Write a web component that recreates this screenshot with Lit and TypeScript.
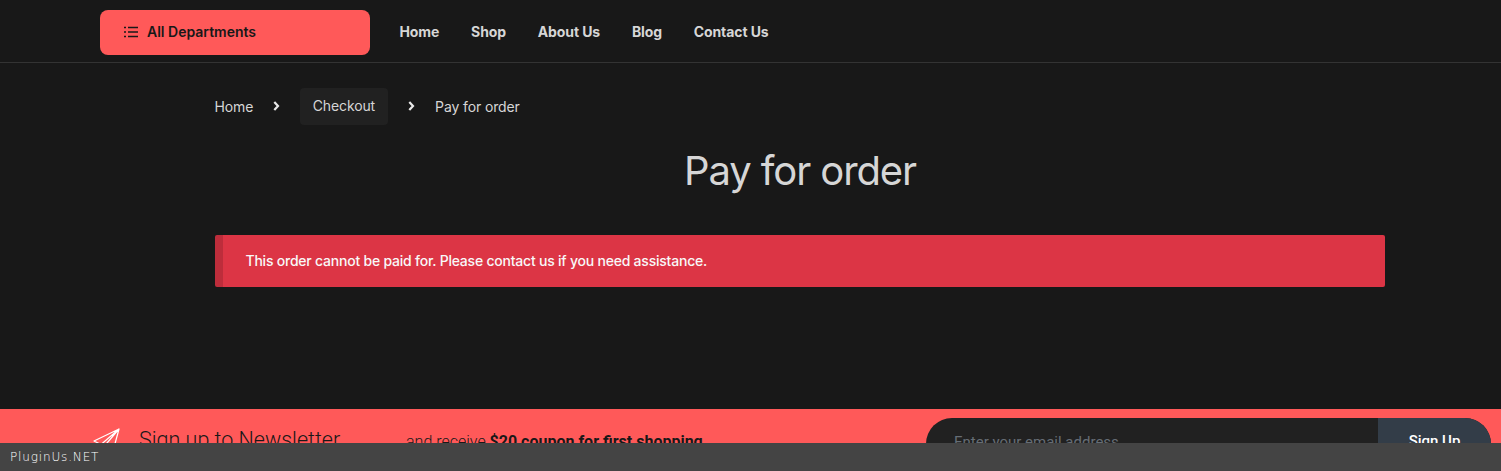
import { LitElement, html, css } from "lit";
import { customElement } from "lit/decorators.js";

@customElement("app-root")
export class AppRoot extends LitElement {
  static styles = css`
    :host {
      display: block;
      height: 471px;
      overflow: hidden;
      background: #181818;
      font-family: Inter, "Liberation Sans", sans-serif;
      color: #d6d6d6;
      position: relative;
    }
    .header {
      height: 63px;
      box-sizing: border-box;
      border-bottom: 1px solid #333333;
      display: flex;
      align-items: flex-start;
      padding: 10px 0 0 100px;
    }
    .dept {
      width: 270px;
      height: 45px;
      box-sizing: border-box;
      background: #ff5959;
      border-radius: 8px;
      display: flex;
      align-items: center;
      gap: 9px;
      padding: 0 0 2px 24px;
      font-size: 14px;
      font-weight: 600;
      color: #181818;
    }
    .nav {
      display: flex;
      gap: 31.8px;
      margin-left: 29.5px;
      height: 43px;
      align-items: center;
      font-size: 14px;
      font-weight: 700;
      letter-spacing: -0.1px;
      color: #d6d6d6;
    }
    .main {
      height: 346px;
      box-sizing: border-box;
      padding: 25px 116px 0 215px;
    }
    .crumbs {
      display: flex;
      align-items: center;
      height: 37px;
      margin-left: -0.5px;
      font-size: 14px;
      letter-spacing: -0.12px;
      color: #d6d6d6;
    }
    .crumbs svg { display: block; margin-top: -2px; }
    .sep1 { margin: 0 19.5px 0 20px; }
    .sep2 { margin: 0 20px 0 20px; }
    .chip {
      background: #212121;
      border-radius: 4px;
      height: 37px;
      padding: 0 13px 2px 13px;
      display: flex;
      align-items: center;
      box-sizing: border-box;
    }
    h1 {
      margin: 22px 0 0;
      font-size: 40px;
      line-height: 48px;
      font-weight: 400;
      letter-spacing: -1.1px;
      text-align: center;
      color: #d6d6d6;
    }
    .alert {
      margin-top: 40px;
      height: 52px;
      box-sizing: border-box;
      background: #dc3545;
      border-left: 8px solid #bd2d3b;
      border-radius: 2px;
      padding: 0 0 1px 22.5px;
      display: flex;
      align-items: center;
      font-size: 14px;
      font-weight: 500;
      letter-spacing: -0.22px;
      color: #f8f8f8;
    }
    .news {
      height: 80px;
      background: #ff5959;
      display: flex;
      align-items: flex-start;
      padding: 9px 10px 0 93px;
      color: #181818;
    }
    .news svg { margin-top: 10px; flex: none; }
    .news-title {
      font-family: Roboto, sans-serif;
      font-size: 21.5px;
      font-weight: 300;
      line-height: 28px;
      margin: 8px 0 0 19px;
      width: 267px;
      flex: none;
      white-space: nowrap;
    }
    .news-text {
      font-family: Roboto, sans-serif;
      font-size: 16px;
      font-weight: 300;
      line-height: 28px;
      margin-top: 10px;
      flex: 1;
      white-space: nowrap;
    }
    .news-text b { font-weight: 700; }
    .form {
      width: 565px;
      height: 60px;
      flex: none;
      display: flex;
      background: #212121;
      border-radius: 26px;
      overflow: hidden;
      font-family: Roboto, sans-serif;
      font-size: 15px;
    }
    .ph {
      flex: 1;
      padding: 14px 0 0 28px;
      line-height: 20px;
      color: #666d75;
    }
    .btn {
      width: 113px;
      background: #333d48;
      color: #fff;
      text-align: center;
      padding-top: 13px;
      line-height: 20px;
      font-weight: 500;
    }
    .bar {
      position: absolute;
      left: 0;
      right: 0;
      bottom: 0;
      height: 28px;
      background: #444444;
      color: #ffffff;
      font-family: "DejaVu Sans", sans-serif;
      font-size: 12px;
      font-weight: 200;
      line-height: 29px;
      letter-spacing: 0.85px;
      padding-left: 10px;
    }
  `;

  private chevron(cls: string) {
    return html`<svg class=${cls} width="7" height="10" viewBox="0 0 7 10" fill="none" stroke="#e8e8e8" stroke-width="2.2"><path d="M1.3 1 L5 5 L1.3 9"/></svg>`;
  }

  render() {
    return html`
      <div class="header">
        <div class="dept">
          <svg width="14" height="12" viewBox="0 0 14 12" fill="none" stroke="#181818" stroke-width="1.4">
            <path d="M0 1.5h2M0 6h2M0 10.5h2M4 1.5h10M4 6h10M4 10.5h10"/>
          </svg>
          All Departments
        </div>
        <div class="nav">
          <span>Home</span><span>Shop</span><span>About Us</span><span>Blog</span><span>Contact Us</span>
        </div>
      </div>
      <div class="main">
        <div class="crumbs">
          <span>Home</span>
          ${this.chevron("sep1")}
          <span class="chip">Checkout</span>
          ${this.chevron("sep2")}
          <span>Pay for order</span>
        </div>
        <h1>Pay for order</h1>
        <div class="alert">This order cannot be paid for. Please contact us if you need assistance.</div>
      </div>
      <div class="news">
        <svg width="27" height="26" viewBox="0 0 27 26" fill="none" stroke="#fff" stroke-width="1.2" stroke-linejoin="round">
          <path d="M26 1 L1 13 L8 16.5 L26 1 L11 18.5 L20 23 Z M8 16.5 L8 24 L11 18.5"/>
        </svg>
        <div class="news-title">Sign up to Newsletter</div>
        <div class="news-text">and receive <b>$20 coupon for first shopping</b></div>
        <div class="form">
          <div class="ph">Enter your email address</div>
          <div class="btn">Sign Up</div>
        </div>
      </div>
      <div class="bar">PluginUs.NET</div>
    `;
  }
}
